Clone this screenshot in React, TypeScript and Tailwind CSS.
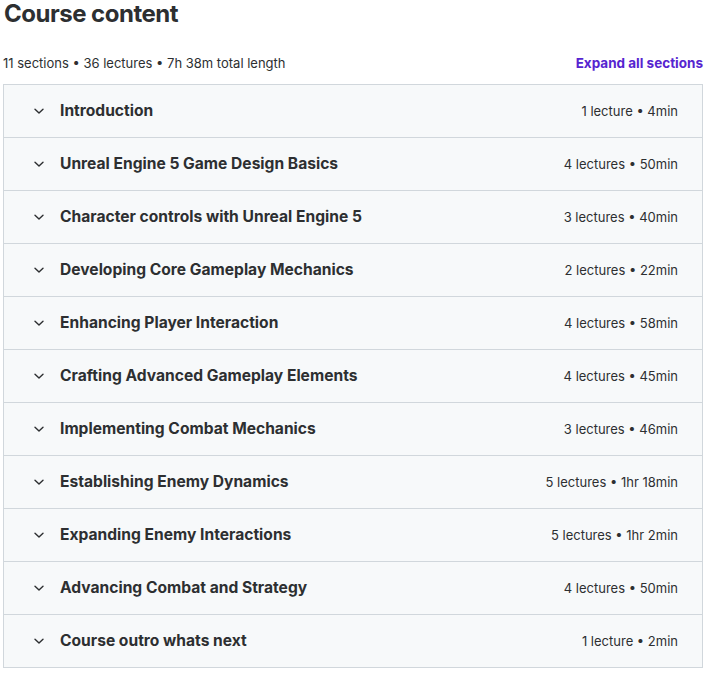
import React from "react";

const sections: [string, string][] = [
  ["Introduction", "1 lecture • 4min"],
  ["Unreal Engine 5 Game Design Basics", "4 lectures • 50min"],
  ["Character controls with Unreal Engine 5", "3 lectures • 40min"],
  ["Developing Core Gameplay Mechanics", "2 lectures • 22min"],
  ["Enhancing Player Interaction", "4 lectures • 58min"],
  ["Crafting Advanced Gameplay Elements", "4 lectures • 45min"],
  ["Implementing Combat Mechanics", "3 lectures • 46min"],
  ["Establishing Enemy Dynamics", "5 lectures • 1hr 18min"],
  ["Expanding Enemy Interactions", "5 lectures • 1hr 2min"],
  ["Advancing Combat and Strategy", "4 lectures • 50min"],
  ["Course outro whats next", "1 lecture • 2min"],
];

function Chevron() {
  return (
    <svg width="12" height="12" viewBox="0 0 12 12" fill="none" className="shrink-0">
      <path d="M2 4.2 L6 8 L10 4.2" stroke="#2d2f31" strokeWidth="1.4" strokeLinecap="round" strokeLinejoin="round" />
    </svg>
  );
}

export default function App() {
  return (
    <div className="w-[710px] h-[675px] bg-white text-[#2d2f31] overflow-hidden" style={{ fontFamily: "Inter, 'Noto Sans', sans-serif" }}>
      <h2 className="text-[24px] leading-[28px] font-bold pl-[4px] tracking-[-0.5px]">Course content</h2>
      <div className="flex items-end justify-between pl-[3px] pr-[7px] mt-[27px] h-[16px]">
        <span className="text-[13px] leading-[16px] text-[#2d2f31]">11 sections • 36 lectures • 7h 38m total length</span>
        <span className="text-[13.5px] leading-[16px] font-bold text-[#5624d0]">Expand all sections</span>
      </div>
      <div className="ml-[3px] w-[700px] mt-[13px] border border-[#d1d7dc]">
        {sections.map(([title, meta], i) => (
          <div
            key={i}
            className={`box-content flex items-center h-[52px] bg-[#f7f9fa] pl-[29px] pr-[24px] ${i < sections.length - 1 ? "border-b border-[#d1d7dc]" : ""}`}
          >
            <Chevron />
            <span className="ml-[15px] text-[15.6px] font-bold leading-[20px] flex-1">{title}</span>
            <span className="text-[13px] leading-[16px]">{meta}</span>
          </div>
        ))}
      </div>
    </div>
  );
}
